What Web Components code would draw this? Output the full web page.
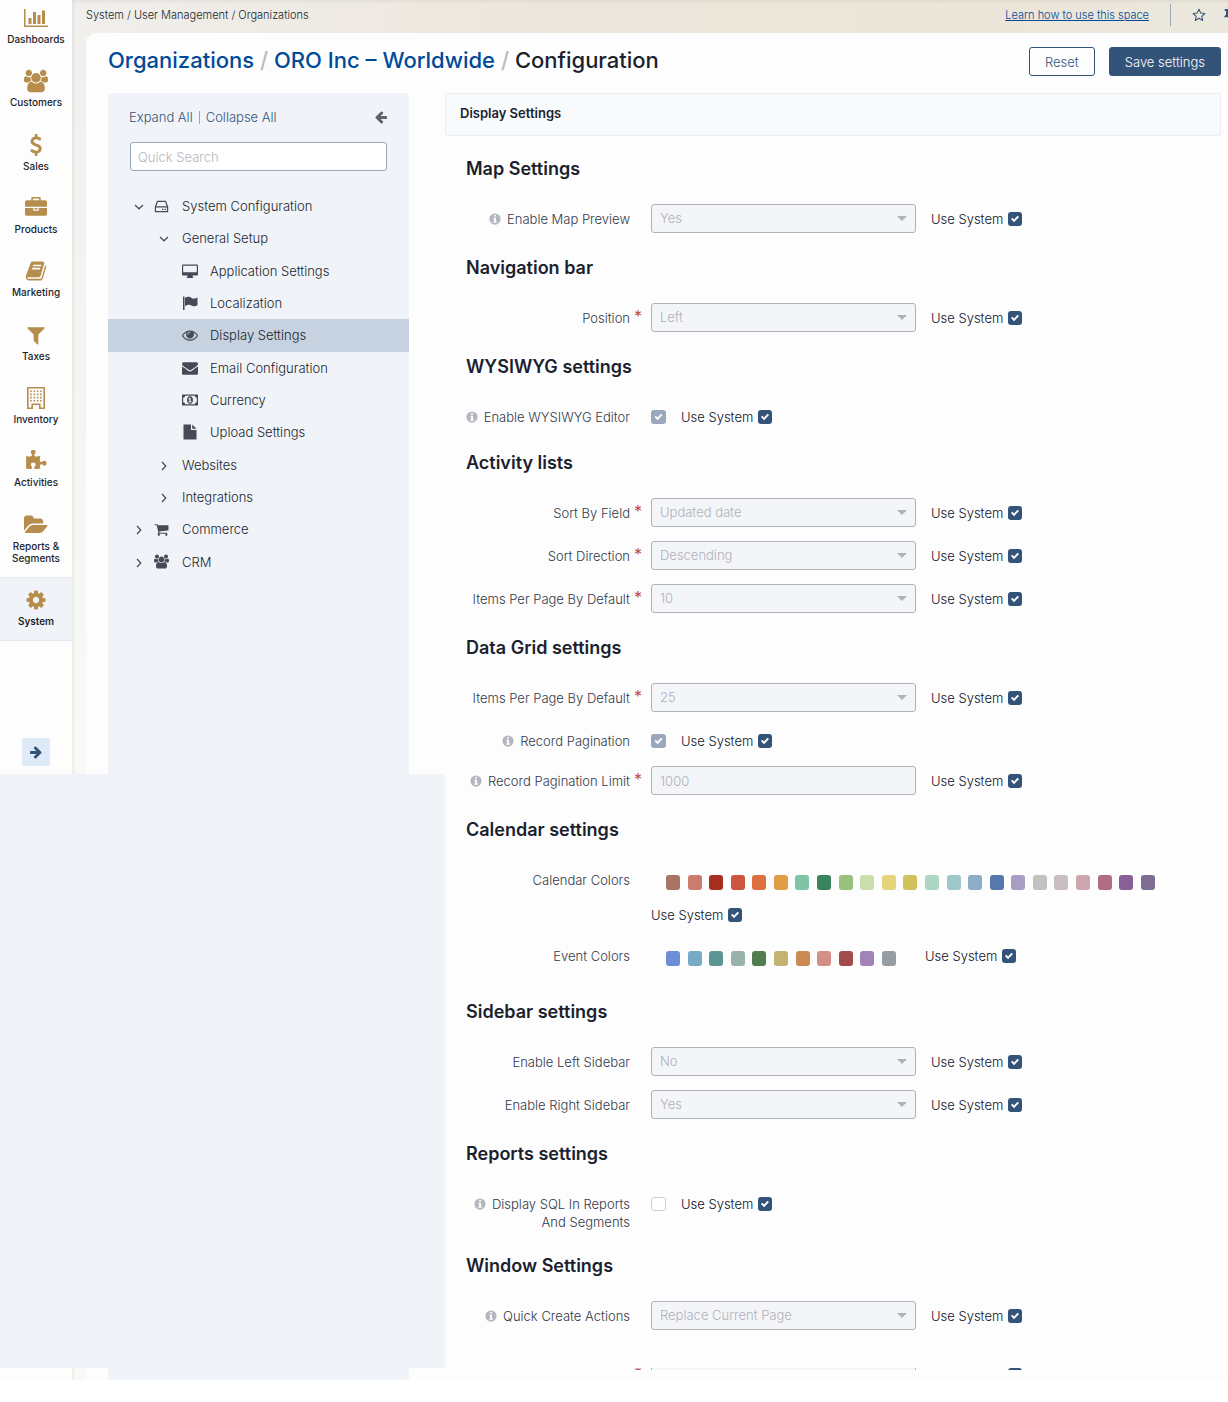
<!DOCTYPE html>
<html lang="en">
<head>
<meta charset="utf-8">
<title>Organizations - ORO Inc - Configuration</title>
<style>
  body {
    margin: 0;
    background: #fff;
    color: #1b1f2e;
    font-family: Inter, "Liberation Sans", sans-serif;
    font-size: 13px;
    font-weight: 300;
    line-height: 18px;
  }
</style>
</head>
<body>
<config-page></config-page>

<script>
// icon name -> [viewBox, markup]
const ICONS = {
  chart: ['0 0 2048 1792', '<path d="M640 896v512h-256v-512h256zm384-512v1024h-256v-1024h256zm1024 1152v128h-2048v-1536h128v1408h1920zm-640-896v768h-256v-768h256zm384-384v1152h-256v-1152h256z"/>'],
  users: ['0 0 1920 1792', '<path d="M593 896q-162 5-265 128h-134q-82 0-138-40.500t-56-118.500q0-353 124-353 6 0 43.500 21t97.500 42.500 119 21.500q67 0 133-23-5 37-5 66 0 139 81 256zm1071 637q0 120-73 189.500t-194 69.500h-874q-121 0-194-69.500t-73-189.500q0-53 3.500-103.500t14-109 26.500-108.500 43-97.500 62-81 85.500-53.500 111.500-20q10 0 43 21.500t73 48 107 48 135 21.500 135-21.500 107-48 73-48 43-21.500q61 0 111.500 20t85.500 53.500 62 81 43 97.500 26.500 108.500 14 109 3.500 103.500zm-1024-1277q0 106-75 181t-181 75-181-75-75-181 75-181 181-75 181 75 75 181zm704 384q0 159-112.500 271.500t-271.500 112.500-271.500-112.500-112.500-271.500 112.500-271.500 271.500-112.500 271.500 112.500 112.500 271.500zm576 225q0 78-56 118.500t-138 40.500h-134q-103-123-265-128 81-117 81-256 0-29-5-66 66 23 133 23 59 0 119-21.500t97.500-42.500 43.500-21q124 0 124 353zm-128-609q0 106-75 181t-181 75-181-75-75-181 75-181 181-75 181 75 75 181z"/>'],
  dollar: ['0 0 1792 1792', '<path d="M1362 1185q0 153-99.500 263.500t-258.500 136.500v175q0 14-9 23t-23 9h-135q-13 0-22.500-9.500t-9.500-22.500v-175q-66-9-127.500-31t-101.500-44.500-74-48-46.500-37.500-17.500-18q-17-21-2-41l103-135q7-10 23-12 15-2 24 9l2 2q113 99 243 125 37 8 74 8 81 0 142.500-43t61.500-122q0-28-15-53t-33.500-42-58.500-37.500-66-32-80-32.500q-39-16-61.500-25t-61.500-26.500-62.500-31-56.500-35.500-53.500-42.500-43.500-49-35.500-58-21-66.500-8.500-78q0-138 98-242t255-134v-180q0-13 9.500-22.500t22.500-9.500h135q14 0 23 9t9 23v176q57 6 110.500 23t87 33.500 63.500 37.500 39 29 15 14q17 18 5 38l-81 146q-8 15-23 16-14 3-27-7-3-3-14.500-12t-39-26.500-58.500-32-74.500-26-85.500-11.500q-95 0-155 43t-60 111q0 26 8.500 48t29.500 41.500 39.500 33 56 31 60.500 27 70 27.500q53 20 81 31.500t76 35 75.500 42.500 62 50 53 63.500 31.500 76.500 13 94z"/>'],
  briefcase: ['0 0 1792 1792', '<path d="M640 256h512v-128h-512v128zm1152 640v480q0 66-47 113t-113 47h-1472q-66 0-113-47t-47-113v-480h672v160q0 26 19 45t45 19h320q26 0 45-19t19-45v-160h672zm-768 0v128h-256v-128h256zm768-480v384h-1792v-384q0-66 47-113t113-47h352v-160q0-40 28-68t68-28h576q40 0 68 28t28 68v160h352q66 0 113 47t47 113z"/>'],
  book: ['0 0 1792 1792', '<path d="M1703 478q40 57 18 129l-275 906q-19 64-76.5 107.500t-122.500 43.500h-923q-77 0-148.500-53.500t-99.500-131.500q-24-67-2-127 0-4 3-27t4-37q1-8-3-21.500t-3-19.500q2-11 8-21t16.500-23.500 16.500-23.500q23-38 45-91.500t30-91.500q3-10 .5-30t-.5-28q3-11 17-28t17-23q21-36 42-92t25-90q1-9-2.500-32t.5-28q4-13 22-30.500t22-22.500q19-26 42.500-84.500t27.500-96.500q1-8-3-25.500t-2-26.500q2-8 9-18t18-23 17-21q8-12 16.500-30.500t15-35 16-36 19.500-32 26.500-23.500 36-11.500 47.500 5.500l-1 3q38-9 51-9h761q74 0 114 56t18 130l-274 906q-36 119-71.500 153.500t-128.500 34.500h-869q-27 0-38 15-11 16-1 43 24 70 144 70h923q29 0 56-15.500t35-41.500l300-987q7-22 5-57 38 15 59 43zm-1064 2q-4 13 2 22.500t20 9.500h608q13 0 25.500-9.500t16.500-22.500l21-64q4-13-2-22.500t-20-9.500h-608q-13 0-25.500 9.500t-16.500 22.500zm-83 256q-4 13 2 22.500t20 9.500h608q13 0 25.500-9.500t16.500-22.500l21-64q4-13-2-22.500t-20-9.500h-608q-13 0-25.500 9.500t-16.500 22.500z"/>'],
  filter: ['0 0 1792 1792', '<path d="M1595 295q17 41-14 70l-493 493v742q0 42-39 59-13 5-25 5-27 0-45-19l-256-256q-19-19-19-45v-486l-493-493q-31-29-14-70 17-39 59-39h1280q42 0 59 39z"/>'],
  building: ['0 0 24 24', '<path fill-rule="evenodd" d="M3 1h18v22h-6v-4H9v4H3zM4.600 2.600v18.800h2.800V17.500h9.200v3.900h2.800V2.600z"/><path fill="none" stroke="currentColor" stroke-width="1.600" stroke-dasharray="1.600 1.700" d="M6.200 5.200h12M6.200 8.400h12M6.200 11.600h12M6.200 14.800h12"/>'],
  puzzle: ['0 0 1792 1792', '<path d="M1755 1083q0 81-44.500 135t-123.500 54q-41 0-77.500-17.500t-59-38-56.500-38-71-17.500q-110 0-110 124 0 39 16 115t15 115v5q-22 0-33 1-34 3-97.500 11.500t-115.500 13.500-98 5q-61 0-103-26.500t-42-83.500q0-37 17.500-71t38-56.500 38-59 17.500-77.500q0-79-54-123.500t-135-44.500q-84 0-143 45.500t-59 127.500q0 43 15 83t33.500 64.500 33.500 53 15 50.500q0 45-46 89-37 35-117 35-95 0-245-24-9-2-27.500-4t-27.500-4l-13-2q-1 0-3-1-2 0-2-1v-1024q2 1 17.500 3.500t34 5 21.500 3.500q150 24 245 24 80 0 117-35 46-44 46-89 0-22-15-50.500t-33.500-53-33.500-64.500-15-83q0-82 59-127.500t144-45.500q80 0 134 44.500t54 123.500q0 41-17.500 77.500t-38 59-38 56.500-17.500 71q0 57 42 83.500t103 26.500q64 0 180-15t163-17v2q-1 2-3.500 17.500t-5 34-3.500 21.500q-24 150-24 245 0 80 35 117 44 46 89 46 22 0 50.500-15t53-33.500 64.500-33.500 83-15q82 0 127.500 59t45.500 143z"/>'],
  folder: ['0 0 1920 1792', '<path d="M1879 952q0 31-31 66l-336 396q-43 51-120.500 86.500t-143.500 35.500h-1088q-34 0-60.500-13t-26.500-43q0-31 31-66l336-396q43-51 120.500-86.500t143.500-35.500h1088q34 0 60.500 13t26.500 43zm-343-344v160h-832q-94 0-197 47.500t-164 119.500l-337 396-5 6q0-4-.5-12.500t-.5-12.500v-960q0-92 66-158t158-66h320q92 0 158 66t66 158v32h544q92 0 158 66t66 158z"/>'],
  cog: ['0 0 1792 1792', '<path d="M1152 896q0-106-75-181t-181-75-181 75-75 181 75 181 181 75 181-75 75-181zm512-109v222q0 12-8 23t-20 13l-185 28q-19 54-39 91 35 50 107 138 10 12 10 25t-9 23q-27 37-99 108t-94 71q-12 0-26-9l-138-108q-44 23-91 38-16 136-29 186-7 28-36 28h-222q-14 0-24.500-8.500t-11.500-21.500l-28-184q-49-16-90-37l-141 107q-10 9-25 9-14 0-25-11-126-114-165-168-7-10-7-23 0-12 8-23 15-21 51-66.500t54-70.500q-27-50-41-99l-183-27q-13-2-21-12.500t-8-23.500v-222q0-12 8-23t19-13l186-28q14-46 39-92-40-57-107-138-10-12-10-24 0-10 9-23 26-36 98.500-107.500t94.500-71.500q13 0 26 10l138 107q44-23 91-38 16-136 29-186 7-28 36-28h222q14 0 24.500 8.500t11.500 21.500l28 184q49 16 90 37l142-107q9-9 24-9 13 0 25 10 129 119 165 170 7 8 7 22 0 12-8 23-15 21-51 66.500t-54 70.500q26 50 41 98l183 28q13 2 21 12.500t8 23.500z"/>'],
  'arrow-left': ['0 0 1792 1792', '<path d="M1664 896v128q0 53-32.500 90.500t-84.500 37.500h-704l293 294q38 36 38 90t-38 90l-75 76q-37 37-90 37-52 0-91-37l-651-652q-37-37-37-90 0-52 37-91l651-650q38-38 91-38 52 0 90 38l75 74q38 38 38 91t-38 91l-293 293h704q52 0 84.500 37.500t32.500 90.500z"/>'],
  'arrow-right': ['0 0 1792 1792', '<path transform="matrix(-1 0 0 1 1792 0)" d="M1664 896v128q0 53-32.500 90.500t-84.500 37.500h-704l293 294q38 36 38 90t-38 90l-75 76q-37 37-90 37-52 0-91-37l-651-652q-37-37-37-90 0-52 37-91l651-650q38-38 91-38 52 0 90 38l75 74q38 38 38 91t-38 91l-293 293h704q52 0 84.500 37.500t32.500 90.500z"/>'],
  star: ['0 0 16 16', '<path fill="none" stroke="currentColor" stroke-width="1.200" stroke-linejoin="round" d="M8 1.500l2 4.300 4.700.5-3.500 3.200 1 4.700L8 11.800l-4.200 2.400 1-4.700L1.300 6.300 6 5.800z"/>'],
  pin: ['0 0 16 16', '<path d="M2 1h11v2.500h-1.500v3.500l2.500 3.500H8.500V15h-2v-4.500H1L3.500 7V3.500H2z"/>'],
  hdd: ['0 0 16 16', '<path fill="none" stroke="currentColor" stroke-width="1.300" stroke-linejoin="round" d="M1.500 8.500L3.600 2.500h8.800l2.100 6v5h-13zM1.500 8.500h13"/><path d="M8.500 10.300h1.500v1.500H8.500zM11.300 10.300h1.500v1.500h-1.500z"/>'],
  desktop: ['0 0 16 16', '<path fill-rule="evenodd" d="M1 1.500h14a1 1 0 0 1 1 1v9a1 1 0 0 1-1 1h-4.500v1l.8.700v.8H4.700v-.8l.8-.700v-1H1a1 1 0 0 1-1-1v-9a1 1 0 0 1 1-1zM1.200 2.700v6.600h13.600V2.700z"/>'],
  flag: ['0 0 16 16', '<path d="M1 1.500h1.500V15H1zM3 3c3.500-2 5-1 6.500 0s3 1 6-.5v7.700c-3 1.500-4.500 1.300-6 .4s-3-1.300-6.500.4z"/>'],
  eye: ['0 0 1792 1792', '<path d="M1664 960q-152-236-381-353 61 104 61 225 0 185-131.500 316.500t-316.500 131.500-316.500-131.500-131.500-316.500q0-121 61-225-229 117-381 353 133 205 333.500 326.500t434.500 121.500 434.500-121.500 333.500-326.500zm-720-384q0-20-14-34t-34-14q-125 0-214.500 89.500t-89.500 214.500q0 20 14 34t34 14 34-14 14-34q0-86 61-147t147-61q20 0 34-14t14-34zm848 384q0 34-20 69-140 230-376.500 368.500t-499.500 138.500-499.500-139-376.500-368q-20-35-20-69t20-69q140-229 376.500-368t499.500-139 499.500 139 376.500 368q20 35 20 69z"/>'],
  envelope: ['0 0 1792 1792', '<path d="M1792 710v794q0 66-47 113t-113 47h-1472q-66 0-113-47t-47-113v-794q44 49 101 87 362 246 497 345 57 42 92.500 65.500t94.500 48 110 24.500h2q51 0 110-24.500t94.500-48 92.500-65.500q170-123 498-345 57-39 100-87zm0-294q0 79-49 151t-122 123q-376 261-468 325-10 7-42.500 31t-54 38.500-52 32.500-57.500 27-50 9h-2q-23 0-50-9t-57.500-27-52-32.500-54-38.500-42.500-31q-91-64-262-182.500t-205-142.500q-62-42-117-115.500t-55-136.500q0-78 41.500-130t118.500-52h1472q65 0 112.500 47t47.500 113z"/>'],
  money: ['0 0 16 16', '<path fill-rule="evenodd" d="M0 2.500h16v11H0zM3.200 3.700a2 2 0 0 1-2 2v4.600a2 2 0 0 1 2 2h9.600a2 2 0 0 1 2-2V5.700a2 2 0 0 1-2-2z"/><path fill-rule="evenodd" d="M8 4.300c1.900 0 3 1.600 3 3.700s-1.100 3.700-3 3.700S5 10.100 5 8s1.100-3.700 3-3.700zM7.500 5.800L6.200 6.900l.6.700.6-.4v2h-.9v1h3v-1h-.9V5.800z"/>'],
  file: ['0 0 16 16', '<path d="M1.500.5H9V6h5.500v9.500h-13zM10.200.5L14.500 4.800h-4.300z"/>'],
  cart: ['0 0 1792 1792', '<path d="M704 1536q0 52-38 90t-90 38-90-38-38-90 38-90 90-38 90 38 38 90zm896 0q0 52-38 90t-90 38-90-38-38-90 38-90 90-38 90 38 38 90zm128-1088v512q0 24-16.500 42.500t-40.500 21.500l-1044 122q13 60 13 70 0 16-24 64h920q26 0 45 19t19 45-19 45-45 19h-1024q-26 0-45-19t-19-45q0-11 8-31.500t16-36 21.500-40 15.500-29.500l-177-823h-204q-26 0-45-19t-19-45 19-45 45-19h256q16 0 28.500 6.500t19.500 15.500 13 24.500 8 26 5.500 29.500 4.500 26h1201q26 0 45 19t19 45z"/>'],
  info: ['0 0 16 16', '<path fill-rule="evenodd" d="M8 .5a7.500 7.500 0 1 1 0 15 7.500 7.500 0 0 1 0-15zM6.800 2.800v2h2.500v-2zM5.700 6.200v1.600h1.100v3.600H5.700V13h4.800v-1.600H9.300V6.200z"/>'],
  down: ['0 0 12 12', '<path fill="none" stroke="currentColor" stroke-width="1.200" d="M2 5l4 3.800L10 5"/>'],
  right: ['0 0 12 12', '<path fill="none" stroke="currentColor" stroke-width="1.200" d="M4 3l3.800 4L4 11"/>']
};

class UiIcon extends HTMLElement {
  constructor() {
    super();
    this.attachShadow({ mode: 'open' });
  }

  connectedCallback() {
    const [box, markup] = ICONS[this.getAttribute('name')];
    this.shadowRoot.innerHTML = `
      <style>
        :host {
          display: inline-flex;
          flex: none;
          width: var(--icon-size, 16px);
          height: var(--icon-size, 16px);
        }

        svg {
          width: 100%;
          height: 100%;
          fill: currentColor;
        }
      </style>
      <svg viewBox="${box}" aria-hidden="true">${markup}</svg>
    `;
  }
}

class NavItem extends HTMLElement {
  constructor() {
    super();
    this.attachShadow({ mode: 'open' });
  }

  connectedCallback() {
    this.shadowRoot.innerHTML = `
      <style>
        :host {
          display: block;
        }

        a {
          display: flex;
          flex-direction: column;
          align-items: center;
          gap: 3px;
          padding: 11px 0 13px;
          color: #1b1f2e;
          font-size: 10px;
          font-weight: 500;
          line-height: 12px;
          text-align: center;
          text-decoration: none;
        }

        ui-icon {
          --icon-size: 24px;
          color: #b68d4c;
        }

        :host([small]) ui-icon {
          --icon-size: 22px;
          margin: 1px;
        }

        :host([active]) a {
          background: #f0f3f8;
          box-shadow: inset 0 1px #e4e8ee, inset 0 -1px #e4e8ee;
          padding-bottom: 14px;
          font-weight: 600;
        }
      </style>
      <a href="#"><ui-icon name="${this.getAttribute('icon')}"></ui-icon><span><slot></slot></span></a>
    `;
  }
}

class MainNav extends HTMLElement {
  constructor() {
    super();
    this.attachShadow({ mode: 'open' });
    this.shadowRoot.innerHTML = `
      <style>
        :host {
          display: flex;
          flex-direction: column;
          align-items: center;
          justify-content: space-between;
          overflow: hidden;
          padding-bottom: 8px;
        }

        nav {
          display: flex;
          flex-direction: column;
          justify-content: space-between;
          align-self: stretch;
          height: 646px;
          margin-top: -5px;
        }

        button {
          display: flex;
          align-items: center;
          justify-content: center;
          width: 28px;
          height: 28px;
          padding: 0;
          border: none;
          border-radius: 3px;
          background: #dfeaf8;
          color: #345379;
          --icon-size: 14px;
        }
      </style>
      <nav aria-label="Main menu">
        <nav-item icon="chart">Dashboards</nav-item>
        <nav-item icon="users">Customers</nav-item>
        <nav-item icon="dollar" small>Sales</nav-item>
        <nav-item icon="briefcase" small>Products</nav-item>
        <nav-item icon="book" small>Marketing</nav-item>
        <nav-item icon="filter" small>Taxes</nav-item>
        <nav-item icon="building">Inventory</nav-item>
        <nav-item icon="puzzle" small>Activities</nav-item>
        <nav-item icon="folder">Reports &amp;<br>Segments</nav-item>
        <nav-item icon="cog" small active>System</nav-item>
      </nav>
      <button type="button" aria-label="Expand menu"><ui-icon name="arrow-right"></ui-icon></button>
    `;
  }
}

class TopBar extends HTMLElement {
  constructor() {
    super();
    this.attachShadow({ mode: 'open' });
    this.shadowRoot.innerHTML = `
      <style>
        :host {
          display: flex;
          align-items: center;
          height: 30px;
          padding: 0 0 3px 14px;
          font-size: 11px;
          background: linear-gradient(#0000000d, #0000 4px);
        }

        .crumbs {
          flex: 1;
        }

        a {
          color: #004a98;
        }

        .line {
          width: 1px;
          height: 22px;
          margin: 0 21px;
          background: #9aa6b8;
        }

        button {
          display: flex;
          padding: 0;
          border: none;
          background: none;
          color: #345379;
          --icon-size: 14px;
        }

        .pin {
          width: 5px;
          margin-left: 17px;
          overflow: hidden;
        }
      </style>
      <span class="crumbs">System / User Management / Organizations</span>
      <a href="#">Learn how to use this space</a>
      <span class="line"></span>
      <button type="button" aria-label="Add to favorites"><ui-icon name="star"></ui-icon></button>
      <button type="button" class="pin" aria-label="Pin the page"><ui-icon name="pin"></ui-icon></button>
    `;
  }
}

class PageTitle extends HTMLElement {
  constructor() {
    super();
    this.attachShadow({ mode: 'open' });
    this.shadowRoot.innerHTML = `
      <style>
        :host {
          display: flex;
          gap: 14px;
          padding: 14px 0 17px;
        }

        h1 {
          flex: 1;
          margin: 0;
          font-size: 22px;
          font-weight: 500;
          line-height: 26px;
        }

        a {
          color: #004a98;
          text-decoration: none;
        }

        i {
          color: #b9bcc2;
          font-style: normal;
        }

        button {
          box-sizing: border-box;
          height: 29px;
          padding: 0 15px;
          border: 1px solid #345379;
          border-radius: 3px;
          background: #fdfdfd;
          color: #345379;
          font: inherit;
        }

        .primary {
          background: #345379;
          color: #fff;
        }
      </style>
      <h1><a href="#">Organizations</a> <i>/</i> <a href="#">ORO Inc – Worldwide</a> <i>/</i> Configuration</h1>
      <button type="button">Reset</button>
      <button type="button" class="primary">Save settings</button>
    `;
  }
}

class TreeItem extends HTMLElement {
  constructor() {
    super();
    this.attachShadow({ mode: 'open' });
  }

  connectedCallback() {
    const arrow = this.getAttribute('arrow');
    const icon = this.getAttribute('icon');
    this.shadowRoot.innerHTML = `
      <style>
        :host {
          display: flex;
          align-items: center;
          padding-left: 25px;
        }

        :host([level="2"]) {
          padding-left: 50px;
        }

        :host([level="3"]) {
          padding-left: 74px;
        }

        :host([active]) {
          background: #c7d2e1;
        }

        .arrow {
          --icon-size: 12px;
          width: 18px;
          color: #454a56;
        }

        :host([level="2"]) .arrow {
          width: 24px;
        }

        .icon {
          width: 28px;
          color: #454a56;
        }

        :host([level="1"]) .icon {
          width: 25px;
          padding: 0 3px;
          --icon-size: 15px;
        }

        span {
          display: flex;
        }

        a {
          color: inherit;
          text-decoration: none;
        }
      </style>
      ${arrow ? `<span class="arrow"><ui-icon name="${arrow}"></ui-icon></span>` : ''}
      ${icon ? `<span class="icon"><ui-icon name="${icon}"></ui-icon></span>` : ''}
      <a href="#"><slot></slot></a>
    `;
  }
}

class ConfigTree extends HTMLElement {
  constructor() {
    super();
    this.attachShadow({ mode: 'open' });
    this.shadowRoot.innerHTML = `
      <style>
        :host {
          display: block;
          border-radius: 4px 4px 0 0;
          background: #f0f3f8;
        }

        .tools {
          display: flex;
          align-items: center;
          padding: 15px 21px 0;
        }

        .tools button {
          display: flex;
          padding: 0;
          border: none;
          background: none;
          color: #345379;
          font: inherit;
        }

        .tools .divider {
          width: 1px;
          height: 13px;
          margin: 0 6px;
          background: #9aa6b8;
        }

        .tools .fold {
          margin-left: auto;
          color: #5d626c;
          --icon-size: 14px;
        }

        input {
          display: block;
          box-sizing: border-box;
          width: calc(100% - 44px);
          height: 29px;
          margin: 16px 22px 19px;
          padding: 0 7px;
          border: 1px solid #9aa6b8;
          border-radius: 3px;
          background: #fff;
          font: inherit;
        }

        input::placeholder {
          color: #b4b7bd;
        }

        .tree {
          display: grid;
          grid-auto-rows: 1fr;
          height: 388px;
        }
      </style>
      <div class="tools">
        <button type="button">Expand All</button>
        <span class="divider"></span>
        <button type="button">Collapse All</button>
        <button type="button" class="fold" aria-label="Hide the tree"><ui-icon name="arrow-left"></ui-icon></button>
      </div>
      <input type="search" placeholder="Quick Search" aria-label="Quick Search">
      <nav class="tree" aria-label="Configuration">
        <tree-item level="1" arrow="down" icon="hdd">System Configuration</tree-item>
        <tree-item level="2" arrow="down">General Setup</tree-item>
        <tree-item level="3" icon="desktop">Application Settings</tree-item>
        <tree-item level="3" icon="flag">Localization</tree-item>
        <tree-item level="3" icon="eye" active>Display Settings</tree-item>
        <tree-item level="3" icon="envelope">Email Configuration</tree-item>
        <tree-item level="3" icon="money">Currency</tree-item>
        <tree-item level="3" icon="file">Upload Settings</tree-item>
        <tree-item level="2" arrow="right">Websites</tree-item>
        <tree-item level="2" arrow="right">Integrations</tree-item>
        <tree-item level="1" arrow="right" icon="cart">Commerce</tree-item>
        <tree-item level="1" arrow="right" icon="users">CRM</tree-item>
      </nav>
    `;
  }
}

class ConfigSection extends HTMLElement {
  constructor() {
    super();
    this.attachShadow({ mode: 'open' });
  }

  connectedCallback() {
    this.shadowRoot.innerHTML = `
      <style>
        :host {
          display: block;
          padding-left: 21px;
        }

        h2 {
          margin: 0;
          padding: 9px 0 23px;
          font-size: 18px;
          font-weight: 600;
          line-height: 24px;
        }
      </style>
      <h2>${this.getAttribute('heading')}</h2>
      <slot></slot>
    `;
  }
}

// One setting: label, its control and the "Use System" tick box.
// type: select (default), text, check, palette
class SettingRow extends HTMLElement {
  constructor() {
    super();
    this.attachShadow({ mode: 'open' });
  }

  control() {
    const value = this.getAttribute('value') || '';
    switch (this.getAttribute('type')) {
      case 'check':
        return `<input type="checkbox" id="field" disabled ${this.hasAttribute('checked') ? 'checked' : ''}>`;
      case 'text':
        return `<input type="text" id="field" value="${value}" disabled>`;
      case 'palette':
        return `<div class="palette" role="group" aria-labelledby="name">${value.split(' ').map(c => `<b style="background:#${c}"></b>`).join('')}</div>`;
      default:
        return `<div class="select"><select id="field" disabled><option>${value}</option></select><span class="caret"></span></div>`;
    }
  }

  connectedCallback() {
    const palette = this.getAttribute('type') === 'palette';
    const name = this.getAttribute('label') || '';
    this.shadowRoot.innerHTML = `
      <style>
        :host {
          display: grid;
          grid-template-columns: 164px 21px 1fr;
          min-height: 26px;
          margin-bottom: 14px;
        }

        :host([type="palette"]) {
          padding-bottom: 3px;
        }

        /* row that is scrolled half out of view */
        :host([cut]) {
          min-height: 0;
          height: 2px;
          margin: 38px 0 0;
          overflow: hidden;
        }

        :host([cut]) > * {
          margin-top: -8px;
        }

        .name {
          display: flex;
          justify-content: flex-end;
          gap: 6px;
          padding-top: 6px;
          color: #33394a;
          text-align: right;
          white-space: pre;
        }

        .name ui-icon {
          --icon-size: 12px;
          margin-top: 3px;
          color: #b4b7bd;
        }

        .star {
          padding-left: 4px;
          color: #c14b45;
          font-size: 16px;
          font-weight: 400;
          line-height: 26px;
        }

        .value {
          display: flex;
          flex-wrap: wrap;
          align-items: flex-start;
          gap: 2px 15px;
        }

        .select {
          display: grid;
          width: 265px;
        }

        select,
        input[type="text"] {
          grid-area: 1 / 1;
          box-sizing: border-box;
          width: 265px;
          height: 29px;
          margin: 0;
          padding: 0 8px 2px;
          border: 1px solid #afb2b9;
          border-radius: 3px;
          background: #f4f5f8;
          color: #aeb1b8;
          font: inherit;
          opacity: 1;
          appearance: none;
        }

        input[type="text"] {
          padding-bottom: 0;
        }

        .caret {
          grid-area: 1 / 1;
          place-self: center end;
          margin-right: 9px;
          border: 5px solid transparent;
          border-top-color: #afb2b9;
          border-bottom: none;
        }

        .system {
          display: flex;
          justify-content: space-between;
          width: 91px;
          padding-top: 6px;
          color: #10131f;
        }

        :host([cut]) .system {
          justify-content: flex-end;
        }

        input[type="checkbox"] {
          display: grid;
          place-content: center;
          box-sizing: border-box;
          width: 14px;
          height: 14px;
          margin: 2px 0 0;
          border-radius: 3px;
          background: #345379;
          appearance: none;
        }

        input[type="checkbox"]:disabled {
          width: 15px;
          margin-top: 8px;
          background: #9aa8bc;
        }

        input[type="checkbox"]:not(:checked) {
          border: 1px solid #cdd0d6;
          background: #fff;
        }

        input[type="checkbox"]:checked::before {
          content: "";
          width: 8px;
          height: 8px;
          background: #fff;
          clip-path: polygon(0 50%, 16% 34%, 38% 55%, 82% 8%, 100% 25%, 38% 92%);
        }

        .palette {
          display: flex;
          justify-content: space-between;
          width: var(--palette-width);
          padding: 10px 14px 8px 15px;
        }

        .palette b {
          width: 14px;
          height: 15px;
          border-radius: 3px;
        }
      </style>
      ${palette ? '<div' : '<label for="field"'} class="name" id="name">${this.hasAttribute('info') ? '<ui-icon name="info"></ui-icon>' : ''}<span>${name}</span>${palette ? '</div>' : '</label>'}
      <span class="star">${this.hasAttribute('required') ? '*' : ''}</span>
      <div class="value">
        ${this.control()}
        <label class="system">${this.hasAttribute('cut') ? '' : 'Use System'}<input type="checkbox" checked></label>
      </div>
    `;
  }
}

class ConfigForm extends HTMLElement {
  constructor() {
    super();
    this.attachShadow({ mode: 'open' });
    this.shadowRoot.innerHTML = `
      <style>
        :host {
          display: block;
          padding-bottom: 10px;
        }

        .title {
          box-sizing: border-box;
          height: 43px;
          margin-bottom: 12px;
          padding: 10px 14px;
          border: 1px solid #eaecf0;
          border-radius: 3px;
          background: #f9fafc;
          font-weight: 600;
        }

        .calendar {
          --palette-width: 489px;
        }

        .event {
          --palette-width: 230px;
        }
      </style>
      <div class="title">Display Settings</div>
      <config-section heading="Map Settings">
        <setting-row label="Enable Map Preview" info value="Yes"></setting-row>
      </config-section>
      <config-section heading="Navigation bar">
        <setting-row label="Position" required value="Left"></setting-row>
      </config-section>
      <config-section heading="WYSIWYG settings">
        <setting-row label="Enable WYSIWYG Editor" info type="check" checked></setting-row>
      </config-section>
      <config-section heading="Activity lists">
        <setting-row label="Sort By Field" required value="Updated date"></setting-row>
        <setting-row label="Sort Direction" required value="Descending"></setting-row>
        <setting-row label="Items Per Page By Default" required value="10"></setting-row>
      </config-section>
      <config-section heading="Data Grid settings">
        <setting-row label="Items Per Page By Default" required value="25"></setting-row>
        <setting-row label="Record Pagination" info type="check" checked></setting-row>
        <setting-row label="Record Pagination Limit" info required type="text" value="1000"></setting-row>
      </config-section>
      <config-section heading="Calendar settings">
        <setting-row class="calendar" label="Calendar Colors" type="palette" value="a87564 cd7b6c a72f1f cc5540 de7040 e09d46 80c4a6 37845f 98c27c cadfac e4d57c d1c15b acd5c2 9fc8cc 8eadc8 5877ac a99dc4 c2c2c2 cabdbf cca6ac b06d82 895f97 7d6d95"></setting-row>
        <setting-row class="event" label="Event Colors" type="palette" value="6d8dd6 76aac7 5a9493 9ab3aa 527d4f c3b272 c98950 d38e86 a34a4d a283b9 969da3"></setting-row>
      </config-section>
      <config-section heading="Sidebar settings">
        <setting-row label="Enable Left Sidebar" value="No"></setting-row>
        <setting-row label="Enable Right Sidebar" value="Yes"></setting-row>
      </config-section>
      <config-section heading="Reports settings">
        <setting-row label="Display SQL In Reports
And Segments" info type="check"></setting-row>
      </config-section>
      <config-section heading="Window Settings">
        <setting-row label="Quick Create Actions" info value="Replace Current Page"></setting-row>
        <setting-row cut required></setting-row>
      </config-section>
    `;
  }
}

class ConfigPage extends HTMLElement {
  constructor() {
    super();
    this.attachShadow({ mode: 'open' });
    this.shadowRoot.innerHTML = `
      <style>
        :host {
          display: grid;
          grid-template-columns: 72px 373px 1fr;
          grid-template-rows: 774px 1fr 12px;
          background: #fdfdfd;
        }

        main-nav {
          grid-area: 1 / 1;
        }

        .shell {
          grid-area: 1 / 2 / -1 / -1;
          background:
            linear-gradient(to right, #0000000d, #0000 4px),
            linear-gradient(to right, #f0efec, #ede6dc 40%, #ece5d9 75%, #ebe8dd) 0 0 / 100% 33px no-repeat,
            linear-gradient(#f0efec, #f9faf5 774px);
        }

        .card {
          margin-left: 14px;
          padding: 0 7px 0 22px;
          border-radius: 10px 0 0 0;
          background: #fdfdfd;
        }

        .columns {
          display: grid;
          grid-template-columns: 301px 1fr;
          gap: 36px;
        }

        .panel {
          grid-area: 2 / 1 / 3 / 3;
          background: #f0f3f8;
        }
      </style>
      <main-nav></main-nav>
      <div class="shell">
        <top-bar></top-bar>
        <main class="card">
          <page-title></page-title>
          <div class="columns">
            <config-tree></config-tree>
            <config-form></config-form>
          </div>
        </main>
      </div>
      <div class="panel"></div>
    `;
  }
}

customElements.define('ui-icon', UiIcon);
customElements.define('nav-item', NavItem);
customElements.define('main-nav', MainNav);
customElements.define('top-bar', TopBar);
customElements.define('page-title', PageTitle);
customElements.define('tree-item', TreeItem);
customElements.define('config-tree', ConfigTree);
customElements.define('config-section', ConfigSection);
customElements.define('setting-row', SettingRow);
customElements.define('config-form', ConfigForm);
customElements.define('config-page', ConfigPage);
</script>
</body>
</html>
